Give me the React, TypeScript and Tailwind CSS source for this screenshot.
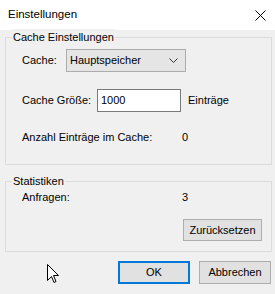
import React from "react";

export default function App() {
  return (
    <div
      className="w-[275px] h-[294px] bg-[#f0f0f0] text-[11px] text-black relative overflow-hidden whitespace-nowrap"
      style={{ fontFamily: '"Liberation Sans", Arial, sans-serif' }}
    >
      <div className="h-[30px] bg-white flex items-center justify-between pl-[8px] pr-[8px]">
        <span className="text-[11.5px]">Einstellungen</span>
        <svg width="11" height="11" viewBox="0 0 11 11" className="mr-[1px]">
          <path d="M0.5 0.5 L10.5 10.5 M10.5 0.5 L0.5 10.5" stroke="#000" strokeWidth="1" />
        </svg>
      </div>
      <div className="pl-[5px] pr-[3px]">
        <div className="mt-[7px] border border-[#dcdcdc] h-[128px] relative pl-[16px]">
          <span className="absolute -top-[9px] left-[6px] bg-[#f0f0f0] px-[1px] leading-[16px]">
            Cache Einstellungen
          </span>
          <div className="flex items-center mt-[11px] h-[23px]">
            <span className="w-[44px]">Cache:</span>
            <div className="w-[120px] h-[23px] bg-[#e5e5e5] border border-[#acacac] flex items-center justify-between pl-[3px] pr-[7px]">
              <span>Hauptspeicher</span>
              <svg width="9" height="5" viewBox="0 0 9 5">
                <path d="M0.5 0.5 L4.5 4.5 L8.5 0.5" stroke="#333" strokeWidth="1" fill="none" />
              </svg>
            </div>
          </div>
          <div className="flex items-center mt-[17px] h-[23px]">
            <span className="w-[75px]">Cache Größe:</span>
            <div className="w-[84px] h-[23px] bg-white border border-[#7a7a7a] flex items-center pl-[3px]">
              1000
            </div>
            <span className="ml-[7px]">Einträge</span>
          </div>
          <div className="flex items-center mt-[17px] h-[16px]">
            <span className="w-[160px]">Anzahl Einträge im Cache:</span>
            <span>0</span>
          </div>
        </div>
        <div className="mt-[16px] border border-[#dcdcdc] h-[71px] relative pl-[16px]">
          <span className="absolute -top-[9px] left-[6px] bg-[#f0f0f0] px-[1px] leading-[16px]">
            Statistiken
          </span>
          <div className="flex items-center mt-[7px] h-[16px]">
            <span className="w-[160px]">Anfragen:</span>
            <span>3</span>
          </div>
          <div className="flex justify-end pr-[9px] mt-[14px]">
            <div className="w-[79px] h-[22px] bg-[#e1e1e1] border border-[#adadad] flex items-center justify-center">
              Zurücksetzen
            </div>
          </div>
        </div>
        <div className="flex justify-end mt-[9px] gap-[9px] pr-[1px]">
          <div className="w-[72px] h-[23px] bg-[#e1e1e1] border-2 border-[#0078d7] flex items-center justify-center">
            OK
          </div>
          <div className="w-[72px] h-[23px] bg-[#e1e1e1] border border-[#adadad] flex items-center justify-center">
            Abbrechen
          </div>
        </div>
      </div>
      <svg
        className="absolute left-[47px] top-[264px]"
        width="12"
        height="19"
        viewBox="0 0 12 19"
      >
        <path
          d="M0.5 0.5 L0.5 16.5 L4.5 12.5 L7 18.5 L9 17.5 L6.5 11.5 L11.5 11.5 Z"
          fill="#fff"
          stroke="#000"
          strokeWidth="1"
          strokeLinejoin="miter"
        />
      </svg>
    </div>
  );
}
